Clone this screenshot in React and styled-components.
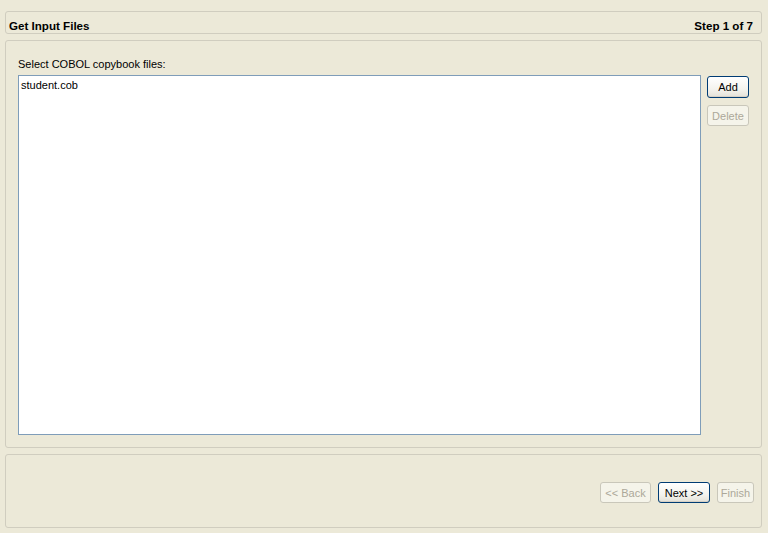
import React from 'react';
import styled, { createGlobalStyle } from 'styled-components';

const GlobalStyle = createGlobalStyle`
  html, body {
    margin: 0;
    padding: 0;
    background: #ece9d8;
  }
  * {
    box-sizing: border-box;
  }
`;

const Wizard = styled.div`
  display: flex;
  flex-direction: column;
  gap: 6px;
  height: 533px;
  padding: 11px 6px 5px 5px;
  font-family: 'Liberation Sans', Arial, sans-serif;
  font-size: 11px;
  color: #000;
  background: #ece9d8;
`;

const Panel = styled.div`
  border: 1px solid #d0cdbf;
  border-radius: 3px;
  background: #ece9d8;
`;

const Header = styled(Panel)`
  display: flex;
  align-items: center;
  justify-content: space-between;
  height: 23px;
  padding: 5px 8px 0 3px;
  font-weight: bold;
  font-size: 11.6px;
`;

const Body = styled(Panel)`
  display: flex;
  flex-direction: column;
  height: 408px;
  padding: 17px 12px 12px 12px;
`;

const Label = styled.div`
  line-height: 13px;
  margin-bottom: 4px;
`;

const Row = styled.div`
  display: flex;
  gap: 6px;
  flex: 1;
`;

const FileList = styled.ul`
  flex: 1;
  margin: 0;
  padding: 2px 2px;
  list-style: none;
  background: #fff;
  border: 1px solid #7f9db9;
  height: 360px;
`;

const FileItem = styled.li`
  line-height: 13px;
  padding: 1px 0;
`;

const Side = styled.div`
  display: flex;
  flex-direction: column;
  gap: 7px;
  padding-top: 1px;
`;

const Button = styled.button`
  font-family: inherit;
  font-size: 11px;
  height: ${p => (p.$tall ? 22 : 21)}px;
  width: ${p => p.$w}px;
  padding: 0;
  border-radius: 3px;
  color: ${p => (p.disabled ? '#aca899' : '#000')};
  border: 1px solid ${p => (p.disabled ? '#c9c7ba' : '#003c74')};
  background: ${p =>
    p.disabled
      ? '#f5f4ea'
      : 'linear-gradient(#ffffff 0%, #f4f3ee 60%, #e3e1d8 100%)'};
  box-shadow: ${p => (p.disabled ? 'none' : 'inset 0 -1px 0 #d6d0c5')};
`;

const Footer = styled(Panel)`
  display: flex;
  align-items: flex-start;
  justify-content: flex-end;
  gap: 7px;
  height: 74px;
  padding: 27px 7px 0 0;
`;

export default function App() {
  return (
    <>
      <GlobalStyle />
      <Wizard>
        <Header>
          <span>Get Input Files</span>
          <span>Step 1 of 7</span>
        </Header>
        <Body>
          <Label>Select COBOL copybook files:</Label>
          <Row>
            <FileList>
              <FileItem>student.cob</FileItem>
            </FileList>
            <Side>
              <Button $w={42} $tall>Add</Button>
              <Button $w={42} disabled>Delete</Button>
            </Side>
          </Row>
        </Body>
        <Footer>
          <Button $w={51} disabled>&lt;&lt; Back</Button>
          <Button $w={52}>Next &gt;&gt;</Button>
          <Button $w={37} disabled>Finish</Button>
        </Footer>
      </Wizard>
    </>
  );
}
